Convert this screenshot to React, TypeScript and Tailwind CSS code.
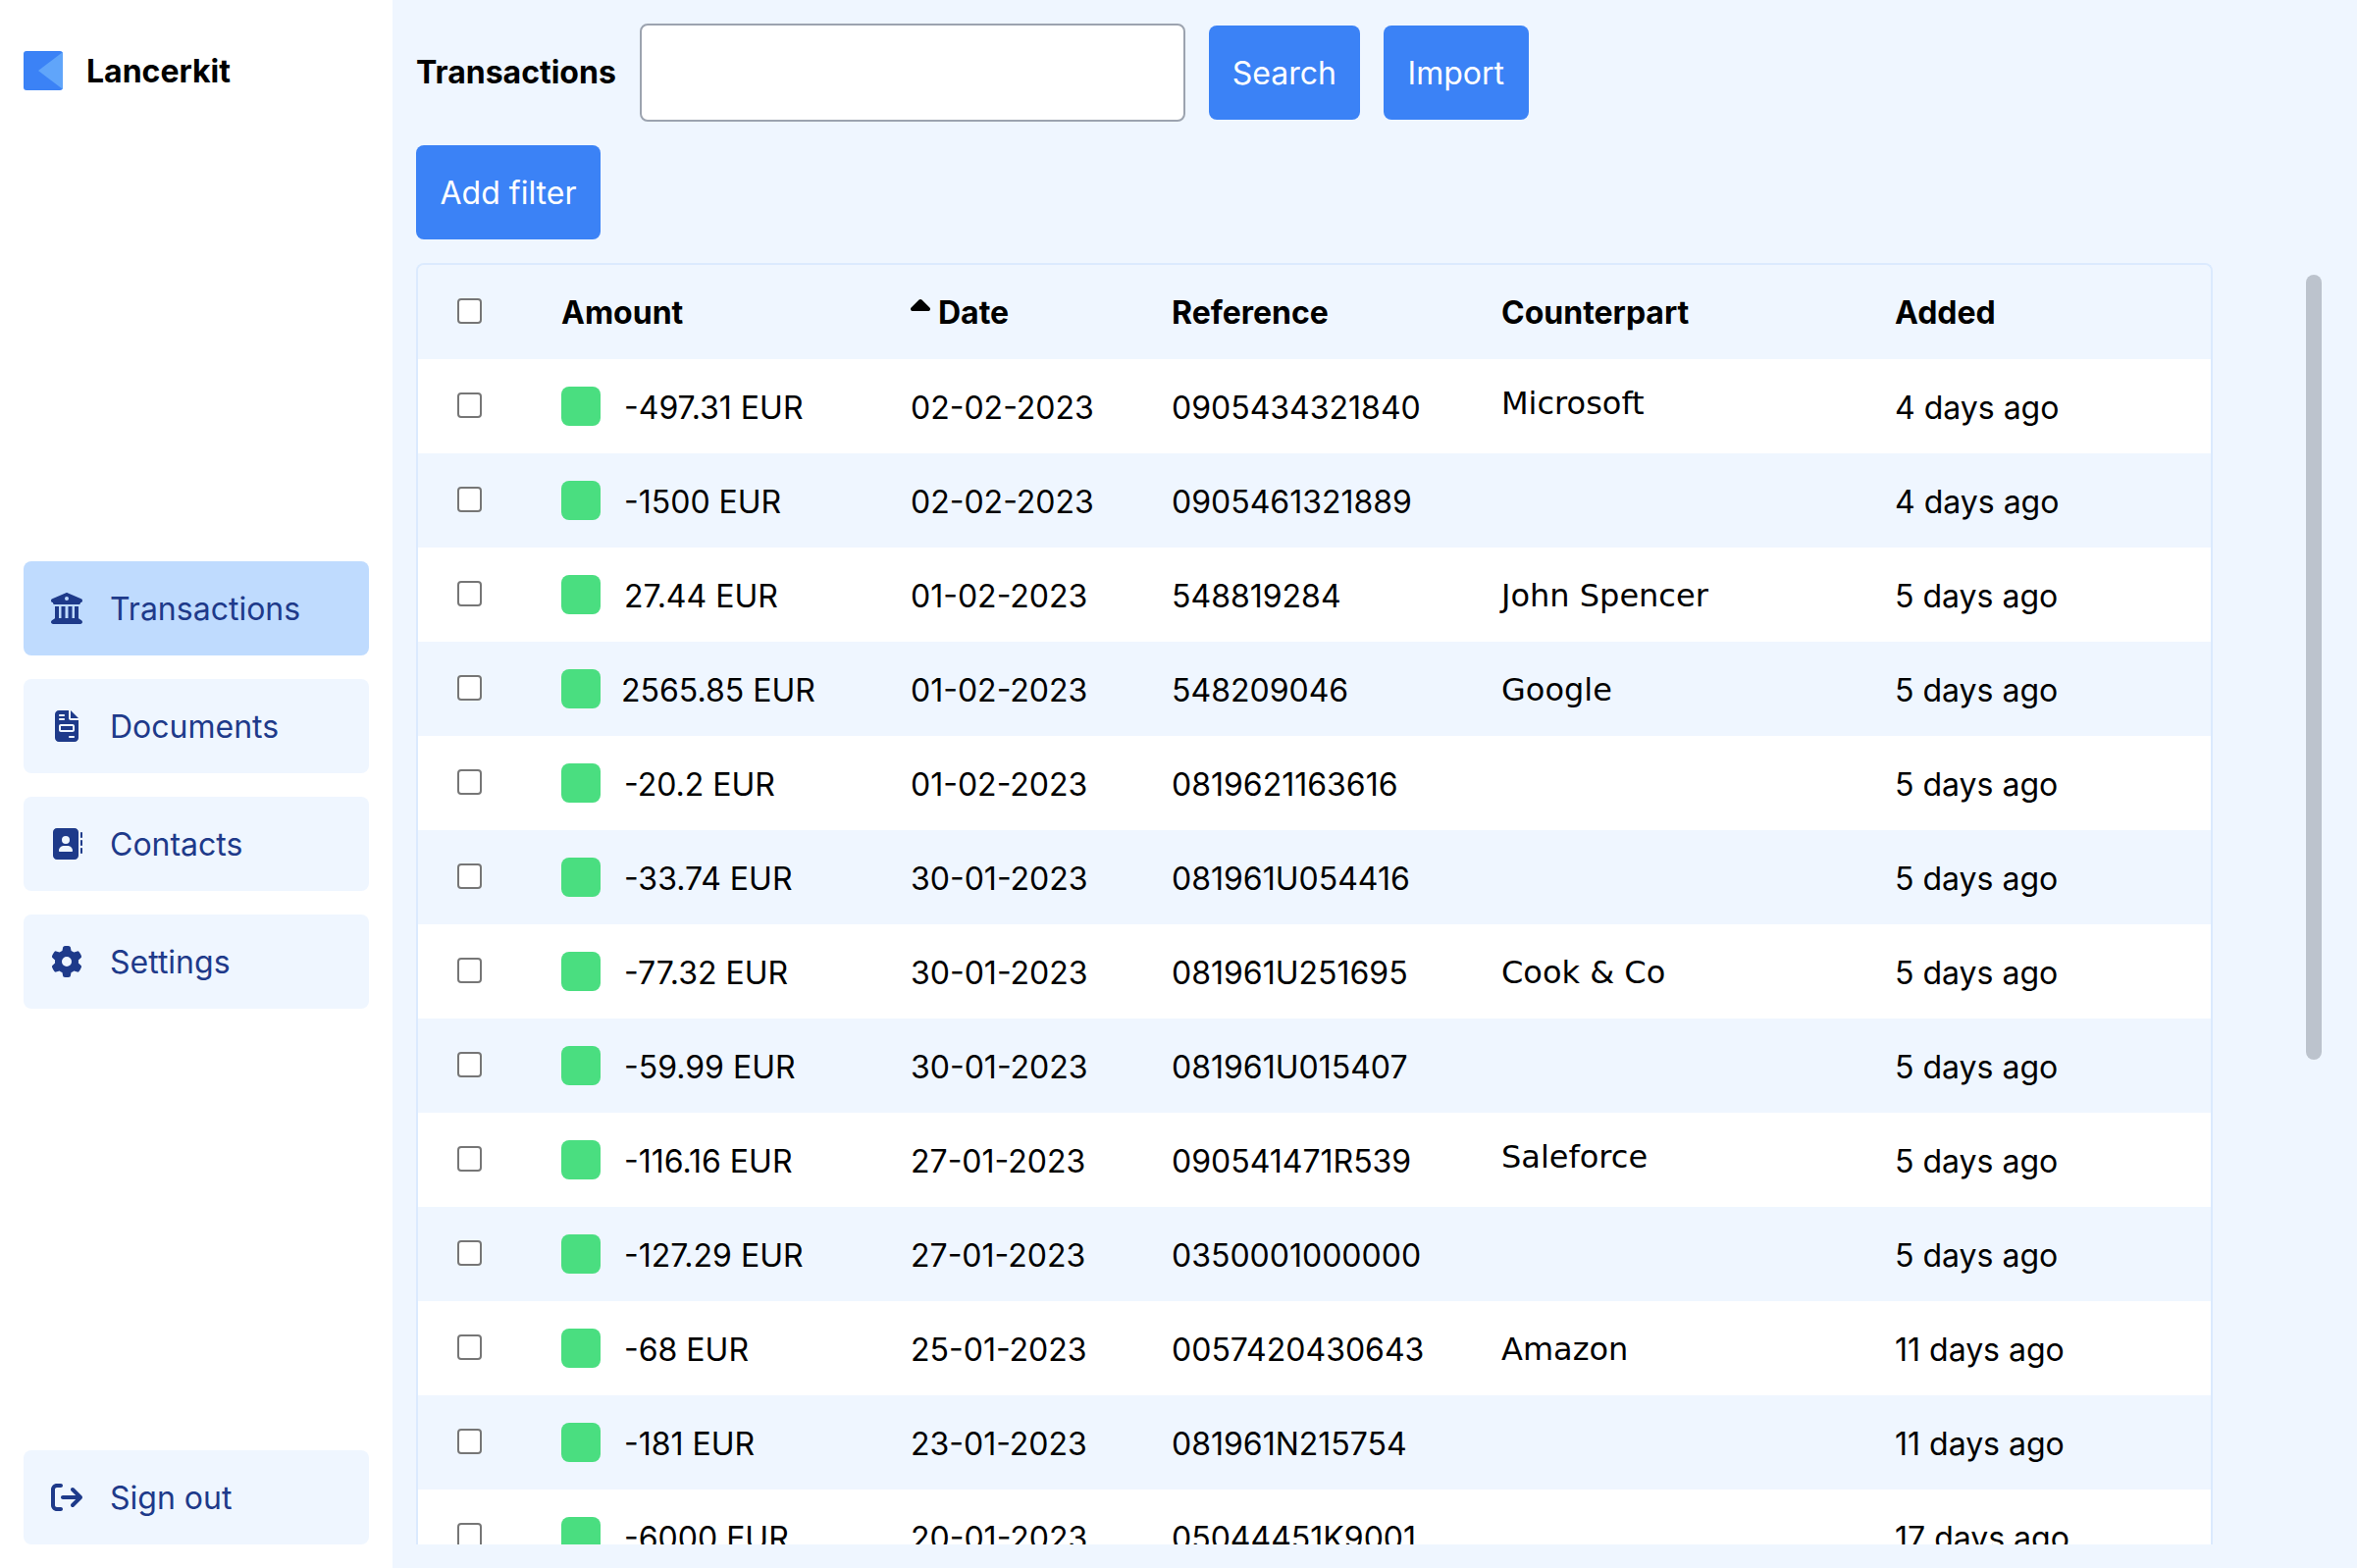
import { FaBuildingColumns, FaFileInvoice, FaAddressBook, FaGear, FaArrowRightFromBracket, FaSortUp } from "react-icons/fa6"

const rows = [
  { amount: "-497.31 EUR", date: "02-02-2023", reference: "0905434321840", counterpart: "Microsoft", added: "4 days ago", raised: true },
  { amount: "-1500 EUR", date: "02-02-2023", reference: "0905461321889", counterpart: "", added: "4 days ago" },
  { amount: "27.44 EUR", date: "01-02-2023", reference: "548819284", counterpart: "John Spencer", added: "5 days ago" },
  { amount: "2565.85 EUR", date: "01-02-2023", reference: "548209046", counterpart: "Google", added: "5 days ago", wide: true },
  { amount: "-20.2 EUR", date: "01-02-2023", reference: "0819621163616", counterpart: "", added: "5 days ago" },
  { amount: "-33.74 EUR", date: "30-01-2023", reference: "081961U054416", counterpart: "", added: "5 days ago" },
  { amount: "-77.32 EUR", date: "30-01-2023", reference: "081961U251695", counterpart: "Cook & Co", added: "5 days ago" },
  { amount: "-59.99 EUR", date: "30-01-2023", reference: "081961U015407", counterpart: "", added: "5 days ago" },
  { amount: "-116.16 EUR", date: "27-01-2023", reference: "090541471R539", counterpart: "Saleforce", added: "5 days ago", raised: true },
  { amount: "-127.29 EUR", date: "27-01-2023", reference: "0350001000000", counterpart: "", added: "5 days ago" },
  { amount: "-68 EUR", date: "25-01-2023", reference: "0057420430643", counterpart: "Amazon", added: "11 days ago" },
  { amount: "-181 EUR", date: "23-01-2023", reference: "081961N215754", counterpart: "", added: "11 days ago" },
  { amount: "-6000 EUR", date: "20-01-2023", reference: "05044451K9001", counterpart: "", added: "17 days ago" },
]

const nav = [
  { label: "Transactions", icon: FaBuildingColumns, active: true },
  { label: "Documents", icon: FaFileInvoice },
  { label: "Contacts", icon: FaAddressBook },
  { label: "Settings", icon: FaGear },
]

function Checkbox() {
  return <input type="checkbox" className="mb-[2px] block h-[26px] w-[25px] appearance-none rounded-[4px] border-2 border-[#767676] bg-white" />
}

function NavItem({ label, icon: Icon, active }: { label: string; icon: typeof FaGear; active?: boolean }) {
  return (
    <a className={`flex h-24 items-center gap-6 rounded-lg px-6 text-[32px] text-[#1e3a8a] ${active ? "bg-[#bfdbfe]" : "bg-[#eff6ff]"}`}>
      <span className="flex w-10 justify-center">
        <Icon className="text-[32px]" />
      </span>
      <span className="pt-[2px]">{label}</span>
    </a>
  )
}

function Button({ children, width }: { children: string; width: string }) {
  return <button className={`h-24 rounded-lg bg-[#3b82f6] pt-[2px] text-[32px] text-white ${width}`}>{children}</button>
}

export default function App() {
  return (
    <div className="flex h-screen overflow-hidden bg-white font-['Inter',sans-serif] text-black">
      {/* Sidebar */}
      <aside className="flex w-[400px] shrink-0 flex-col justify-between px-6 pt-[52px] pb-6">
        <div className="flex h-[70px] items-start gap-6">
          <svg viewBox="0 0 40 40" className="h-10 w-10">
            <rect width="40" height="40" rx="3" fill="#3b82f6" />
            <path d="M40 1 L15 20 L40 39 Z" fill="#60a5fa" />
          </svg>
          <span className="text-[32px] leading-[41px] font-bold">Lancerkit</span>
        </div>
        <nav className="flex flex-col gap-6">
          {nav.map((item) => (
            <NavItem key={item.label} {...item} />
          ))}
        </nav>
        <NavItem label="Sign out" icon={FaArrowRightFromBracket} />
      </aside>

      {/* Main */}
      <main className="relative flex min-w-0 flex-1 flex-col gap-6 bg-[#eff6ff] py-6 pl-6">
        <div className="flex items-center gap-6">
          <h1 className="text-[32px] font-bold">Transactions</h1>
          <input className="h-[100px] w-[556px] rounded-lg border-2 border-[#9ca3af] bg-white" />
          <Button width="w-[154px]">Search</Button>
          <Button width="w-[148px]">Import</Button>
        </div>
        <div className="flex">
          <Button width="w-[188px]">Add filter</Button>
        </div>

        <div className="min-h-0 w-[1831px] flex-1 overflow-hidden rounded-t-lg border-x-2 border-t-2 border-[#dbeafe]">
          <table className="w-full table-fixed border-collapse text-left text-[32px]">
            <colgroup>
              <col className="w-[122px]" />
              <col className="w-[356px]" />
              <col className="w-[266px]" />
              <col className="w-[336px]" />
              <col className="w-[401px]" />
              <col />
            </colgroup>
            <thead>
              <tr className="h-24 bg-[#eff6ff] font-bold">
                <th className="px-10">
                  <Checkbox />
                </th>
                <th className="px-6 pt-[2px]">Amount</th>
                <th className="px-6 pt-[2px]">
                  <span className="flex items-center gap-2">
                    <FaSortUp className="h-8 w-5" />
                    Date
                  </span>
                </th>
                <th className="px-6 pt-[2px]">Reference</th>
                <th className="px-6 pt-[2px]">Counterpart</th>
                <th className="px-6 pt-[2px]">Added</th>
              </tr>
            </thead>
            <tbody>
              {rows.map((row, i) => (
                <tr key={row.reference} className={`h-24 ${i % 2 === 0 ? "bg-white" : "bg-[#eff6ff]"}`}>
                  <td className="px-10">
                    <Checkbox />
                  </td>
                  <td className="px-6">
                    <div className="flex items-center gap-6">
                      <span className="h-10 w-10 shrink-0 rounded-lg bg-[#4ade80]" />
                      <span className={`pt-[3px] ${row.wide ? "-ml-[3px]" : ""}`}>{row.amount}</span>
                    </div>
                  </td>
                  <td className="px-6 pt-[3px]">{row.date}</td>
                  <td className="px-6 pt-[3px]">{row.reference}</td>
                  <td className={`px-6 font-['DejaVu_Sans',sans-serif] ${row.raised ? "pb-[6px]" : "pt-[2px]"}`}>{row.counterpart}</td>
                  <td className="px-6 pt-[3px]">{row.added}</td>
                </tr>
              ))}
            </tbody>
          </table>
        </div>

        {/* scrollbar thumb */}
        <div className="absolute top-[280px] right-[36px] h-[800px] w-4 rounded-full bg-[#bcc3cd]" />
      </main>
    </div>
  )
}
